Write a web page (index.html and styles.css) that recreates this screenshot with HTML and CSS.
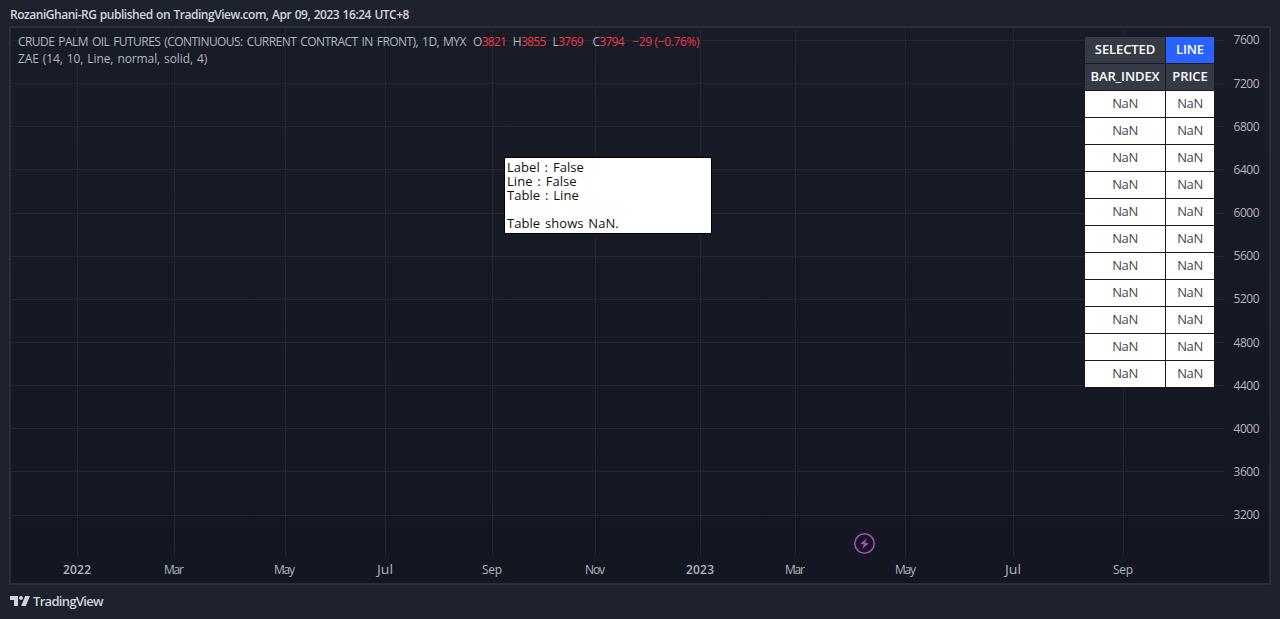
FILE: index.html
```html
<!DOCTYPE html>
<html lang="en">
<head>
    <meta charset="UTF-8">
    <meta name="viewport" content="width=device-width, initial-scale=1.0">
    <title>FCPO - TradingView</title>
    <link rel="stylesheet" href="styles.css">
</head>
<body>
    <div class="header">RozaniGhani-RG published on TradingView.com, Apr 09, 2023 16:24 UTC+8</div>

    <div class="chart">
        <!-- Grid and axes -->
        <svg class="plot" width="1258" height="555" viewBox="11 28 1258 555">
            <path class="grid" d="M11 40.5H1224M11 83.5H1224M11 126.5H1224M11 169.5H1224M11 213.5H1224M11 256.5H1224M11 299.5H1224M11 342.5H1224M11 385.5H1224M11 428.5H1224M11 471.5H1224M11 515.5H1224"/>
            <path class="grid" d="M77.5 28V556M174.5 28V556M285.5 28V556M385.5 28V556M492.5 28V556M595.5 28V556M700.5 28V556M795.5 28V556M905.5 28V556M1013.5 28V556M1123.5 28V556"/>
            <g class="axis">
                <text x="1233.5" y="44" textLength="26">7600</text>
                <text x="1233.5" y="88" textLength="26">7200</text>
                <text x="1233.5" y="131" textLength="26">6800</text>
                <text x="1233.5" y="174" textLength="26">6400</text>
                <text x="1233.5" y="217" textLength="26">6000</text>
                <text x="1233.5" y="260" textLength="26">5600</text>
                <text x="1233.5" y="303" textLength="26">5200</text>
                <text x="1233.5" y="347" textLength="26">4800</text>
                <text x="1233.5" y="390" textLength="26">4400</text>
                <text x="1233.5" y="433" textLength="26">4000</text>
                <text x="1233.5" y="476" textLength="26">3600</text>
                <text x="1233.5" y="519" textLength="26">3200</text>
            </g>
            <g class="axis">
                <text class="year" x="63" y="574" textLength="28">2022</text>
                <text x="164" y="574" textLength="20">Mar</text>
                <text x="274" y="574" textLength="21">May</text>
                <text x="377" y="574" textLength="16" lengthAdjust="spacingAndGlyphs">Jul</text>
                <text x="482" y="574" textLength="20">Sep</text>
                <text x="585" y="574" textLength="20">Nov</text>
                <text class="year" x="686" y="574" textLength="28">2023</text>
                <text x="785" y="574" textLength="20">Mar</text>
                <text x="895" y="574" textLength="21">May</text>
                <text x="1005" y="574" textLength="16" lengthAdjust="spacingAndGlyphs">Jul</text>
                <text x="1113" y="574" textLength="20">Sep</text>
            </g>
            <!-- Event marker -->
            <circle class="event" cx="864.5" cy="543.5" r="9.7"/>
            <path class="bolt" d="M867 538.2L860.4 543.6L863.8 544.5L862.2 549L868.8 543.5L865.2 542.6Z"/>
        </svg>

        <div class="legend">
            <div class="legend-row symbol">
                <span class="title">CRUDE PALM OIL FUTURES (CONTINUOUS: CURRENT CONTRACT IN FRONT), 1D, MYX</span>
                <span class="value">O<b>3821</b></span>
                <span class="value">H<b>3855</b></span>
                <span class="value">L<b>3769</b></span>
                <span class="value">C<b>3794</b></span>
                <span class="change">−29 (−0.76%)</span>
            </div>
            <div class="legend-row study">ZAE (14, 10, Line, normal, solid, 4)</div>
        </div>

        <div class="data-table">
            <div class="head selected">SELECTED</div><div class="head active">LINE</div>
            <div class="head index">BAR_INDEX</div><div class="head price">PRICE</div>
            <div>NaN</div><div>NaN</div>
            <div>NaN</div><div>NaN</div>
            <div>NaN</div><div>NaN</div>
            <div>NaN</div><div>NaN</div>
            <div>NaN</div><div>NaN</div>
            <div>NaN</div><div>NaN</div>
            <div>NaN</div><div>NaN</div>
            <div>NaN</div><div>NaN</div>
            <div>NaN</div><div>NaN</div>
            <div>NaN</div><div>NaN</div>
            <div>NaN</div><div>NaN</div>
        </div>

        <div class="note">Label : False<br>Line : False<br>Table : Line<br><br>Table shows NaN.</div>
    </div>

    <div class="footer">
        <svg width="20" height="10" viewBox="0 0 20 10">
            <path d="M0 0H8V10H4V4H0Z"/>
            <circle cx="11" cy="2" r="2"/>
            <path d="M15.2 0H20L15.8 10H11.2Z"/>
        </svg>
        <span>TradingView</span>
    </div>
</body>
</html>
```
FILE: styles.css
```css
* {
    box-sizing: border-box;
}

body {
    margin: 0;
    height: 619px;
    overflow: hidden;
    background-color: #1e222d;
    color: #d1d4dc;
    font-family: "Open Sans", sans-serif;
    font-size: 12px;
}

.header {
    height: 26px;
    padding: 6px 0 0 10px;
    line-height: 18px;
    font-weight: 600;
    letter-spacing: -0.48px;
    word-spacing: 0.8px;
    white-space: nowrap;
}

.chart {
    position: relative;
    width: 1262px;
    height: 559px;
    margin-left: 9px;
    border: 2px solid #2a2e39;
    background: linear-gradient(#181c27, #131722);
}

.plot {
    display: block;
}

.grid {
    fill: none;
    stroke: #242733;
    stroke-width: 1;
}

.axis {
    fill: #b2b5be;
    font-size: 12px;
    font-weight: 500;
}

.year {
    font-weight: 600;
}

.event {
    fill: none;
    stroke: #ab47bc;
    stroke-width: 1.6;
}

.bolt {
    fill: #ab47bc;
}

/* Legend over the top left of the plot */
.legend {
    position: absolute;
    top: 5px;
    left: 7px;
    color: #b2b5be;
    font-weight: 500;
    white-space: nowrap;
}

.legend-row {
    display: flex;
    height: 17px;
    line-height: 17px;
}

.title {
    width: 455px;
    letter-spacing: -0.55px;
    word-spacing: 1.4px;
}

.value {
    width: 39.8px;
    letter-spacing: -0.7px;
}

.value b,
.change {
    color: #f23645;
    font-weight: 500;
}

.change {
    letter-spacing: -0.35px;
}

.study {
    letter-spacing: -0.1px;
    word-spacing: 1px;
}

.data-table {
    position: absolute;
    top: 9px;
    left: 1074px;
    display: grid;
    grid-template-columns: 80px 48px;
    grid-auto-rows: 26px;
    gap: 1px;
    background-color: #181c27;
}

.data-table div {
    background-color: #fff;
    color: #434651;
    font-size: 13px;
    letter-spacing: -0.4px;
    line-height: 25px;
    text-align: center;
}

.data-table .head {
    background-color: #363a45;
    color: #fff;
    font-weight: 600;
    letter-spacing: -0.1px;
}

.data-table .active {
    background-color: #2962ff;
}

.note {
    position: absolute;
    top: 129px;
    left: 493px;
    width: 208px;
    height: 77px;
    padding: 2px;
    border: 1px solid #000;
    background-color: #fff;
    color: #111;
    font-size: 13px;
    line-height: 14px;
    letter-spacing: 0.05px;
    word-spacing: 1.4px;
}

.footer {
    display: flex;
    align-items: center;
    gap: 3px;
    height: 32px;
    padding-left: 10px;
    font-size: 13px;
    font-weight: 600;
    letter-spacing: -0.68px;
}

.footer svg {
    fill: #d1d4dc;
}
```
